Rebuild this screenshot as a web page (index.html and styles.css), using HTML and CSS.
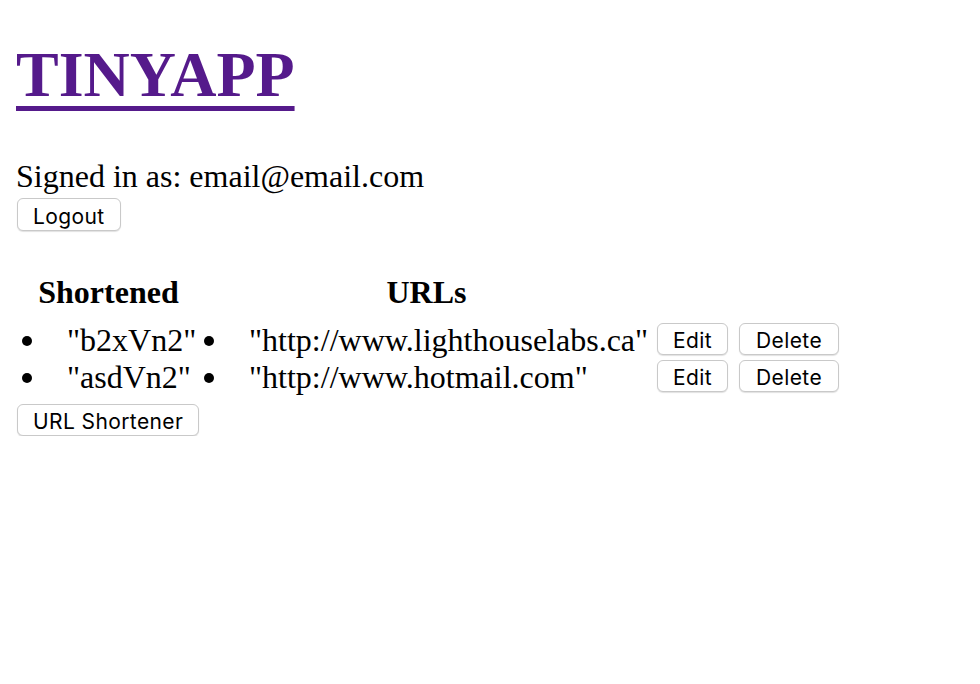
FILE: index.html
```html
<!DOCTYPE html>
<html>
<head>
<meta charset="utf-8">
<title>TinyApp</title>
<link rel="stylesheet" href="styles.css">
</head>
<body>
<div class="page">
  <h1 class="brand"><a href="#" class="brand-link">TINYAPP</a></h1>
  <div class="signed">Signed in as: email@email.com</div>
  <button class="btn btn-logout">Logout</button>

  <div class="urls">
    <div class="head head-short">Shortened</div>
    <div class="head head-long">URLs</div>
    <div class="head"></div>
    <div class="head"></div>

    <div class="cell cell-short"><span class="dot"></span>"b2xVn2"</div>
    <div class="cell cell-long"><span class="dot"></span>"http://www.lighthouselabs.ca"</div>
    <div class="cell cell-btn"><button class="btn">Edit</button></div>
    <div class="cell cell-btn"><button class="btn">Delete</button></div>

    <div class="cell cell-short"><span class="dot"></span>"asdVn2"</div>
    <div class="cell cell-long"><span class="dot"></span>"http://www.hotmail.com"</div>
    <div class="cell cell-btn"><button class="btn">Edit</button></div>
    <div class="cell cell-btn"><button class="btn">Delete</button></div>
  </div>

  <button class="btn btn-new">URL Shortener</button>
</div>
</body>
</html>
```
FILE: styles.css
```css
html, body {
  margin: 0;
  padding: 0;
  background: #ffffff;
}

body {
  font-family: "Liberation Serif", "Times New Roman", serif;
  font-size: 32px;
  color: #000000;
}

.page {
  padding: 0 16px;
}

.brand {
  margin: 43px 0 51px 0;
  font-size: 64px;
  line-height: 64px;
  font-weight: bold;
}

.brand-link {
  color: #551a8b;
  text-decoration: underline;
  text-decoration-thickness: 5px;
  text-underline-offset: 10px;
}

.signed {
  line-height: 36px;
}

.btn {
  display: block;
  box-sizing: border-box;
  height: 33px;
  padding: 3px 15px 0 15px;
  font-family: "Inter", "Liberation Sans", sans-serif;
  font-size: 21px;
  letter-spacing: 0.4px;
  color: #000000;
  background: #ffffff;
  border: 1px solid #c9c9c9;
  border-radius: 6px;
  box-shadow: 0 1px 1px rgba(0, 0, 0, 0.12);
}

.btn-logout {
  margin: 4px 0 0 1px;
}

.urls {
  display: grid;
  grid-template-columns: 182px 454px 83px auto;
  grid-template-rows: 48px 37px 37px;
  margin-top: 43px;
}

.head {
  grid-row: 1;
  font-weight: bold;
  line-height: 36px;
  text-align: center;
}

.head-short, .head-long {
  padding: 0 3px 0 6px;
}

.cell {
  line-height: 36px;
  white-space: nowrap;
}

.cell-short, .cell-long {
  padding-left: 6px;
}

.dot {
  display: inline-block;
  width: 10px;
  height: 10px;
  border-radius: 50%;
  background: #000000;
  vertical-align: 5.5px;
  margin-right: 35px;
}

.cell-btn .btn {
  margin-top: 1px;
  height: 32px;
}

.cell-btn:nth-child(4n+3) .btn {
  margin-left: 5px;
}

.cell-btn:nth-child(4n) .btn {
  margin-left: 4px;
  padding-left: 16px;
  padding-right: 16px;
}

.btn-new {
  margin: 8px 0 0 1px;
  height: 32px;
}
```
